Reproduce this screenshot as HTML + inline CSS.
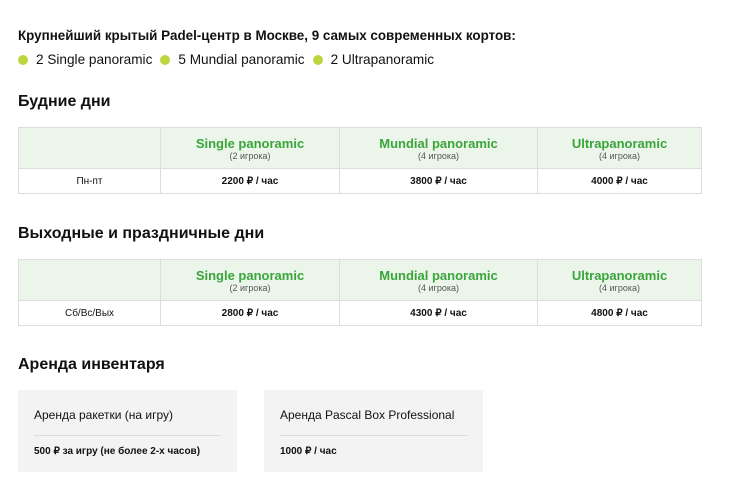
<!DOCTYPE html>
<html><head><meta charset="utf-8"><style>
body{margin:0;width:730px;height:479px;background:#fff;font-family:"Liberation Sans",sans-serif;color:#111;overflow:hidden;position:relative}
.a{position:absolute}
.t1{left:18px;top:28px;font-size:13.4px;font-weight:bold}
.bul{left:18px;top:52px;font-size:13.6px;display:flex;align-items:center}
.dot{width:10px;height:10px;border-radius:50%;background:#bcd640;display:inline-block;margin-right:8px}
.bul span.x{margin-right:8px}
h2{position:absolute;left:18px;margin:0;font-size:16px;font-weight:bold}
table{position:absolute;left:18px;width:684px;border-collapse:collapse;font-size:10px}
td{border:1px solid #ddd;text-align:center;padding:0}
tr.h td{background:#ebf5ea;height:40px}
tr.h b{color:#3aa53a;font-size:13px;display:block;margin-top:1px}
tr.h small{color:#555;font-size:9px}
tr.r td{height:24px}
tr.r td.p{font-weight:bold}
.card{position:absolute;top:390px;width:219px;height:82px;background:#f3f3f3}
.card .n{position:absolute;left:16px;top:18px;font-size:12px}
.card .l{position:absolute;left:16px;right:16px;top:45px;border-top:1px solid #ddd}
.card .p{position:absolute;left:16px;top:56px;font-size:10px;font-weight:bold}
</style></head><body>
<div class="a t1">Крупнейший крытый Padel-центр в Москве, 9 самых современных кортов:</div>
<div class="a bul"><span class="dot"></span><span class="x">2 Single panoramic</span><span class="dot"></span><span class="x">5 Mundial panoramic</span><span class="dot"></span><span>2 Ultrapanoramic</span></div>
<h2 style="top:93px">Будние дни</h2>
<table style="top:127px"><colgroup><col style="width:142px"><col style="width:179px"><col style="width:198px"><col></colgroup>
<tr class="h"><td></td><td><b>Single panoramic</b><small>(2 игрока)</small></td><td><b>Mundial panoramic</b><small>(4 игрока)</small></td><td><b>Ultrapanoramic</b><small>(4 игрока)</small></td></tr>
<tr class="r"><td>Пн-пт</td><td class="p">2200 ₽ / час</td><td class="p">3800 ₽ / час</td><td class="p">4000 ₽ / час</td></tr></table>
<h2 style="top:225px">Выходные и праздничные дни</h2>
<table style="top:259px"><colgroup><col style="width:142px"><col style="width:179px"><col style="width:198px"><col></colgroup>
<tr class="h"><td></td><td><b>Single panoramic</b><small>(2 игрока)</small></td><td><b>Mundial panoramic</b><small>(4 игрока)</small></td><td><b>Ultrapanoramic</b><small>(4 игрока)</small></td></tr>
<tr class="r"><td>Сб/Вс/Вых</td><td class="p">2800 ₽ / час</td><td class="p">4300 ₽ / час</td><td class="p">4800 ₽ / час</td></tr></table>
<h2 style="top:356px">Аренда инвентаря</h2>
<div class="card" style="left:18px"><div class="n">Аренда ракетки (на игру)</div><div class="l"></div><div class="p">500 ₽ за игру (не более 2-х часов)</div></div>
<div class="card" style="left:264px"><div class="n">Аренда Pascal Box Professional</div><div class="l"></div><div class="p">1000 ₽ / час</div></div>
</body></html>
